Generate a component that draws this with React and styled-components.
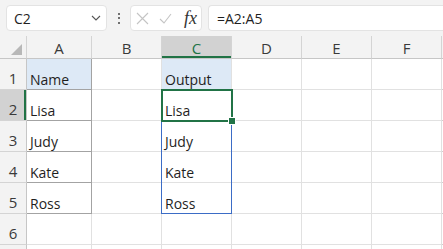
import React from 'react'
import styled, { createGlobalStyle } from 'styled-components'

const GREEN = '#217346'
const SPILL = '#3b6cc6'
const GRID = '#e1e1e1'

const GlobalStyle = createGlobalStyle`
  html, body {
    margin: 0;
    padding: 0;
    background: #fff;
    overflow: hidden;
  }
  body {
    font-family: "Open Sans", "Noto Sans", sans-serif;
    color: #1f1f1f;
  }
`

const Page = styled.div`
  width: 443px;
  height: 249px;
  overflow: hidden;
  display: flex;
  flex-direction: column;
`

const TopBar = styled.div`
  height: 36px;
  box-sizing: border-box;
  padding: 5px 0 0 6px;
  background: #f3f3f3;
  display: flex;
  align-items: flex-start;
  flex-shrink: 0;
`

const Box = styled.div`
  height: 26px;
  box-sizing: border-box;
  background: #fff;
  border: 1px solid #e3e3e3;
  border-radius: 4px;
  display: flex;
  align-items: center;
`

const NameBox = styled(Box)`
  width: 101px;
  padding: 0 5px 0 7px;
  justify-content: space-between;
  font-size: 14px;
`

const Dots = styled.div`
  width: 23px;
  height: 26px;
  display: flex;
  flex-direction: column;
  align-items: center;
  justify-content: center;
  gap: 2.5px;

  span {
    width: 2px;
    height: 2px;
    border-radius: 1px;
    background: #444;
  }
`

const FxBox = styled(Box)`
  width: 72px;
  padding: 0 4px 0 5px;
  gap: 10px;
`

const Fx = styled.span`
  font-family: "Liberation Serif", "DejaVu Serif", serif;
  font-style: italic;
  font-size: 18px;
  color: #333;
  margin-left: 2px;
  line-height: 1;
`

const FormulaBox = styled(Box)`
  flex: 1;
  margin-left: 6px;
  padding-left: 8px;
  border-right: none;
  border-radius: 4px 0 0 4px;
  font-size: 14px;
`

const Sheet = styled.div`
  display: grid;
  grid-template-columns: 27px 65px 70px 70px 70px 70px 70px 1fr;
  grid-template-rows: 23px repeat(7, 31px);
  flex: 1;
  overflow: hidden;
`

const ColHead = styled.div`
  box-sizing: border-box;
  background: ${p => (p.$active ? '#d2d2d2' : '#f3f3f3')};
  color: ${p => (p.$active ? GREEN : '#3a3a3a')};
  border-right: 1px solid #d4d4d4;
  border-bottom: 1px solid #c6c6c6;
  box-shadow: ${p => (p.$active ? `inset 0 -2px 0 ${GREEN}` : 'none')};
  display: flex;
  align-items: center;
  justify-content: center;
  font-size: 15px;
  padding-top: 1px;
`

const Corner = styled(ColHead)`
  justify-content: flex-end;
  align-items: flex-end;
  padding: 0 4px 3px 0;
`

const RowHead = styled.div`
  box-sizing: border-box;
  background: ${p => (p.$active ? '#d2d2d2' : '#f3f3f3')};
  color: #3a3a3a;
  border-right: 1px solid #c6c6c6;
  border-bottom: 1px solid #d4d4d4;
  box-shadow: ${p => (p.$active ? `inset -2px 0 0 ${GREEN}` : 'none')};
  display: flex;
  align-items: flex-end;
  justify-content: center;
  font-size: 15px;
  line-height: 20px;
  padding-bottom: 1px;
`

const Cell = styled.div`
  position: relative;
  box-sizing: border-box;
  background: ${p => p.$fill || '#fff'};
  border-right: 1px solid ${p => p.$edge || GRID};
  border-bottom: 1px solid ${p => p.$edge || GRID};
  display: flex;
  align-items: flex-end;
  padding-left: 3px;
  font-size: 14px;
  line-height: 19px;
  white-space: nowrap;
`

const SpillOutline = styled.div`
  position: absolute;
  z-index: 2;
  left: -1px;
  top: -1px;
  width: 71px;
  height: 125px;
  box-sizing: border-box;
  border: 1px solid ${SPILL};
  pointer-events: none;
`

const Selection = styled.div`
  position: absolute;
  z-index: 3;
  left: -1px;
  top: -1px;
  width: 72px;
  height: 33px;
  box-sizing: border-box;
  border: 2px solid ${GREEN};
  pointer-events: none;
`

const FillHandle = styled.div`
  position: absolute;
  right: -4px;
  bottom: -4px;
  width: 6px;
  height: 6px;
  box-sizing: border-box;
  background: ${GREEN};
  outline: 1px solid #fff;
`

const COLS = ['A', 'B', 'C', 'D', 'E', 'F', 'G']
const ROWS = [
  { A: 'Name', C: 'Output' },
  { A: 'Lisa', C: 'Lisa' },
  { A: 'Judy', C: 'Judy' },
  { A: 'Kate', C: 'Kate' },
  { A: 'Ross', C: 'Ross' },
  {},
  {},
]

function Chevron() {
  return (
    <svg width="10" height="6" viewBox="0 0 10 6">
      <path d="M1 1l4 4 4-4" fill="none" stroke="#555" strokeWidth="1.1" />
    </svg>
  )
}

function CrossIcon() {
  return (
    <svg width="13" height="13" viewBox="0 0 13 13">
      <path d="M1 1l11 11M12 1L1 12" stroke="#c4c4c4" strokeWidth="1.1" fill="none" />
    </svg>
  )
}

function CheckIcon() {
  return (
    <svg width="13" height="11" viewBox="0 0 13 11">
      <path d="M1 6l4 4 7-9" stroke="#c4c4c4" strokeWidth="1.1" fill="none" />
    </svg>
  )
}

function cellProps(col, r) {
  const props = {}
  if (r === 0 && (col === 'A' || col === 'C')) props.$fill = '#dde9f6'
  if (col === 'A' && r < 5) props.$edge = '#a3a3a3'
  if (col === 'G') props.$edge = '#cfcfcf'
  return props
}

export default function App() {
  return (
    <Page>
      <GlobalStyle />
      <TopBar>
        <NameBox>
          <span>C2</span>
          <Chevron />
        </NameBox>
        <Dots>
          <span />
          <span />
          <span />
        </Dots>
        <FxBox>
          <CrossIcon />
          <CheckIcon />
          <Fx>fx</Fx>
        </FxBox>
        <FormulaBox>=A2:A5</FormulaBox>
      </TopBar>

      <Sheet>
        <Corner>
          <svg width="11" height="11" viewBox="0 0 11 11">
            <path d="M11 0V11H0Z" fill="#b8b8b8" />
          </svg>
        </Corner>
        {/* column G is only a sliver at the right edge, so no letter */}
        {COLS.map(c => (
          <ColHead key={c} $active={c === 'C'}>
            {c !== 'G' && c}
          </ColHead>
        ))}

        {ROWS.map((row, r) => (
          <React.Fragment key={r}>
            <RowHead $active={r === 1}>{r < 6 && r + 1}</RowHead>
            {COLS.map(c => (
              <Cell key={c} {...cellProps(c, r)}>
                {row[c]}
                {c === 'C' && r === 1 && (
                  <>
                    <SpillOutline />
                    <Selection>
                      <FillHandle />
                    </Selection>
                  </>
                )}
              </Cell>
            ))}
          </React.Fragment>
        ))}
      </Sheet>
    </Page>
  )
}
